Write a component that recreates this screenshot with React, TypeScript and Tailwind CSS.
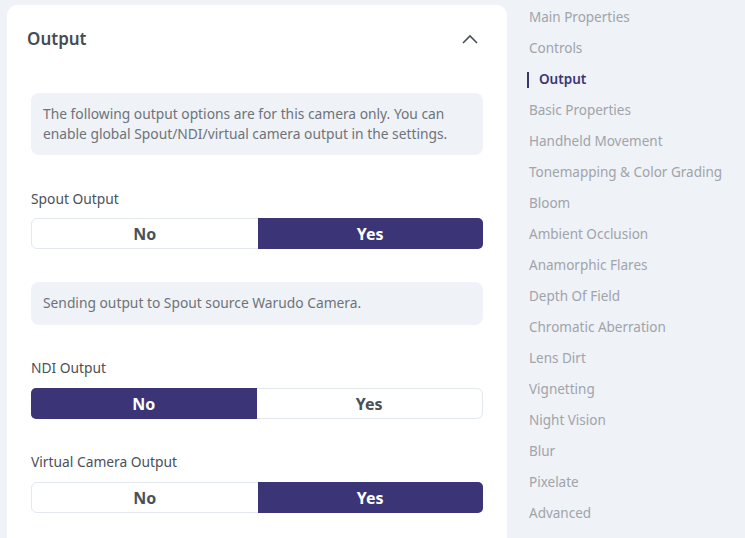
import React from "react";

const navItems = [
  "Main Properties",
  "Controls",
  "Output",
  "Basic Properties",
  "Handheld Movement",
  "Tonemapping & Color Grading",
  "Bloom",
  "Ambient Occlusion",
  "Anamorphic Flares",
  "Depth Of Field",
  "Chromatic Aberration",
  "Lens Dirt",
  "Vignetting",
  "Night Vision",
  "Blur",
  "Pixelate",
  "Advanced",
];

function Toggle({ value }: { value: boolean }) {
  return (
    <div className="flex h-[31px] w-full rounded-[6px] border border-[#e3e7ee] bg-white">
      <div
        className={
          !value
            ? "flex flex-1 items-center justify-center rounded-l-[5px] bg-[#3b3578] text-[16px] font-bold text-white -m-px mr-0"
            : "flex flex-1 items-center justify-center text-[16px] font-bold text-[#4b5058]"
        }
      >
        No
      </div>
      <div
        className={
          value
            ? "flex flex-1 items-center justify-center rounded-r-[5px] bg-[#3b3578] text-[16px] font-bold text-white -m-px ml-0"
            : "flex flex-1 items-center justify-center text-[16px] font-bold text-[#4b5058]"
        }
      >
        Yes
      </div>
    </div>
  );
}

export default function App() {
  return (
    <div
      className="flex h-[538px] w-[745px] overflow-hidden bg-[#eff2f6]"
      style={{ fontFamily: '"Noto Sans", "Open Sans", sans-serif' }}
    >
      <div className="pl-[7px] pt-[5px]">
        <div className="h-[560px] w-[500px] rounded-[10px] bg-white">
          <div className="flex h-[68px] items-center justify-between pl-5 pr-[29px]">
            <span className="text-[17px] font-semibold text-[#474c54]">Output</span>
            <svg width="16" height="10" viewBox="0 0 16 10" fill="none">
              <path d="M1 9L8 2L15 9" stroke="#4a4f57" strokeWidth="1.6" />
            </svg>
          </div>
          <div className="px-6 pt-5">
            <div className="rounded-[8px] bg-[#eff2f6] px-3 py-[11px] text-[13.8px] leading-[20px] text-[#6e737b]">
              The following output options are for this camera only. You can enable global
              Spout/NDI/virtual camera output in the settings.
            </div>
            <div className="mt-[34px] text-[13.8px] leading-[20px] text-[#4b5058]">Spout Output</div>
            <div className="mt-[9px]">
              <Toggle value={true} />
            </div>
            <div className="mt-[33px] flex h-[43px] items-center rounded-[8px] bg-[#eff2f6] px-3 text-[13.8px] text-[#6e737b]">
              Sending output to Spout source Warudo Camera.
            </div>
            <div className="mt-[33px] text-[13.8px] leading-[20px] text-[#4b5058]">NDI Output</div>
            <div className="mt-[10px]">
              <Toggle value={false} />
            </div>
            <div className="mt-[33px] text-[13.8px] leading-[20px] text-[#4b5058]">
              Virtual Camera Output
            </div>
            <div className="mt-[10px]">
              <Toggle value={true} />
            </div>
          </div>
        </div>
      </div>
      <div className="flex flex-col pl-[20px] pt-[2px]">
        {navItems.map((item) =>
          item === "Output" ? (
            <div key={item} className="flex h-[31px] items-center">
              <div className="h-[16px] w-[2px] bg-[#3b3578]" />
              <span className="pl-[10px] text-[13.5px] font-semibold text-[#3b3578]">{item}</span>
            </div>
          ) : (
            <div key={item} className="flex h-[31px] items-center pl-[2px] text-[13.5px] text-[#a0a4ab]">
              {item}
            </div>
          )
        )}
      </div>
    </div>
  );
}
